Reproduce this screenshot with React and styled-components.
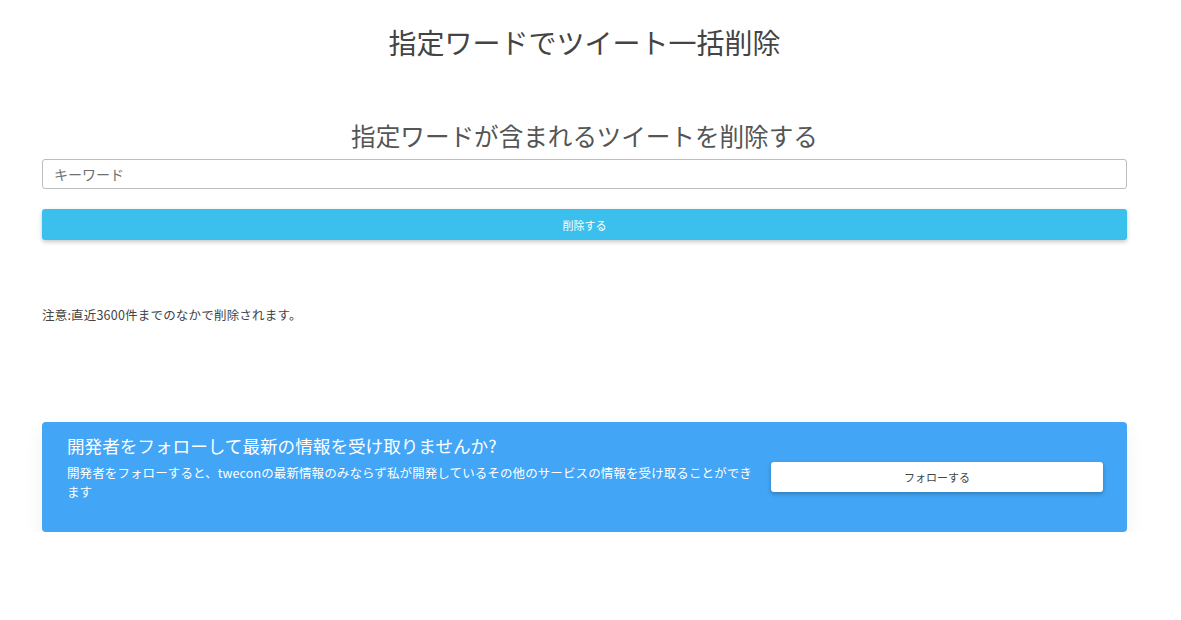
import styled, { createGlobalStyle } from 'styled-components';

const GlobalStyle = createGlobalStyle`
  html, body {
    margin: 0;
    padding: 0;
    background: #fff;
    font-family: "Noto Sans CJK JP", "Noto Sans", sans-serif;
    color: #444;
  }
`;

const Page = styled.div`
  width: 1085px;
  margin: 0 0 0 42px;
  display: flex;
  flex-direction: column;
`;

const Title = styled.h1`
  margin: 22px 0 0;
  text-align: center;
  font-size: 28px;
  font-weight: 400;
  line-height: 40px;
  color: #444;
`;

const SubTitle = styled.h2`
  margin: 55px 0 0;
  text-align: center;
  font-size: 24.6px;
  font-weight: 400;
  line-height: 36px;
  color: #555;
`;

const KeywordInput = styled.input`
  box-sizing: border-box;
  width: 100%;
  height: 30px;
  margin-top: 6px;
  padding: 0 11px;
  border: 1px solid #bdbdbd;
  border-radius: 3px;
  font-family: inherit;
  font-size: 14px;
  color: #444;
  outline: none;
  &::placeholder {
    color: #6f6f6f;
  }
`;

const DeleteButton = styled.button`
  margin-top: 20px;
  height: 31px;
  width: 100%;
  border: none;
  border-radius: 3px;
  background: #3bc0ed;
  color: #fff;
  font-family: inherit;
  font-size: 11px;
  box-shadow: 0 2px 4px rgba(0, 0, 0, 0.22);
  cursor: pointer;
`;

const Note = styled.p`
  margin: 66px 0 0;
  font-size: 12.5px;
  letter-spacing: 0.2px;
  line-height: 18px;
  color: #444;
`;

const FollowCard = styled.div`
  box-sizing: border-box;
  margin-top: 98px;
  height: 110px;
  padding: 12px 24px 0 25px;
  background: #42a5f5;
  border-radius: 4px;
  box-shadow: 0 8px 20px rgba(0, 0, 0, 0.06);
  color: #fff;
`;

const CardTitle = styled.div`
  font-size: 17.6px;
  line-height: 24px;
`;

const CardRow = styled.div`
  display: flex;
  align-items: flex-start;
  gap: 18px;
  margin-top: 5px;
`;

const CardText = styled.p`
  flex: 1;
  margin: 0;
  font-size: 12.5px;
  letter-spacing: 0.1px;
  line-height: 19px;
`;

const FollowButton = styled.button`
  flex: 0 0 332px;
  height: 30px;
  margin-top: -1px;
  border: none;
  border-radius: 3px;
  background: #fff;
  color: #444;
  font-family: inherit;
  font-size: 11px;
  box-shadow: 0 2px 4px rgba(0, 0, 0, 0.25);
  cursor: pointer;
`;

const App = () => {
  return (
    <>
      <GlobalStyle />
      <Page>
        <Title>指定ワードでツイート一括削除</Title>
        <SubTitle>指定ワードが含まれるツイートを削除する</SubTitle>
        <KeywordInput placeholder='キーワード' />
        <DeleteButton>削除する</DeleteButton>
        <Note>注意:直近3600件までのなかで削除されます。</Note>
        <FollowCard>
          <CardTitle>開発者をフォローして最新の情報を受け取りませんか?</CardTitle>
          <CardRow>
            <CardText>
              開発者をフォローすると、tweconの最新情報のみならず私が開発しているその他のサービスの情報を受け取ることができます
            </CardText>
            <FollowButton>フォローする</FollowButton>
          </CardRow>
        </FollowCard>
      </Page>
    </>
  );
};

export default App;
